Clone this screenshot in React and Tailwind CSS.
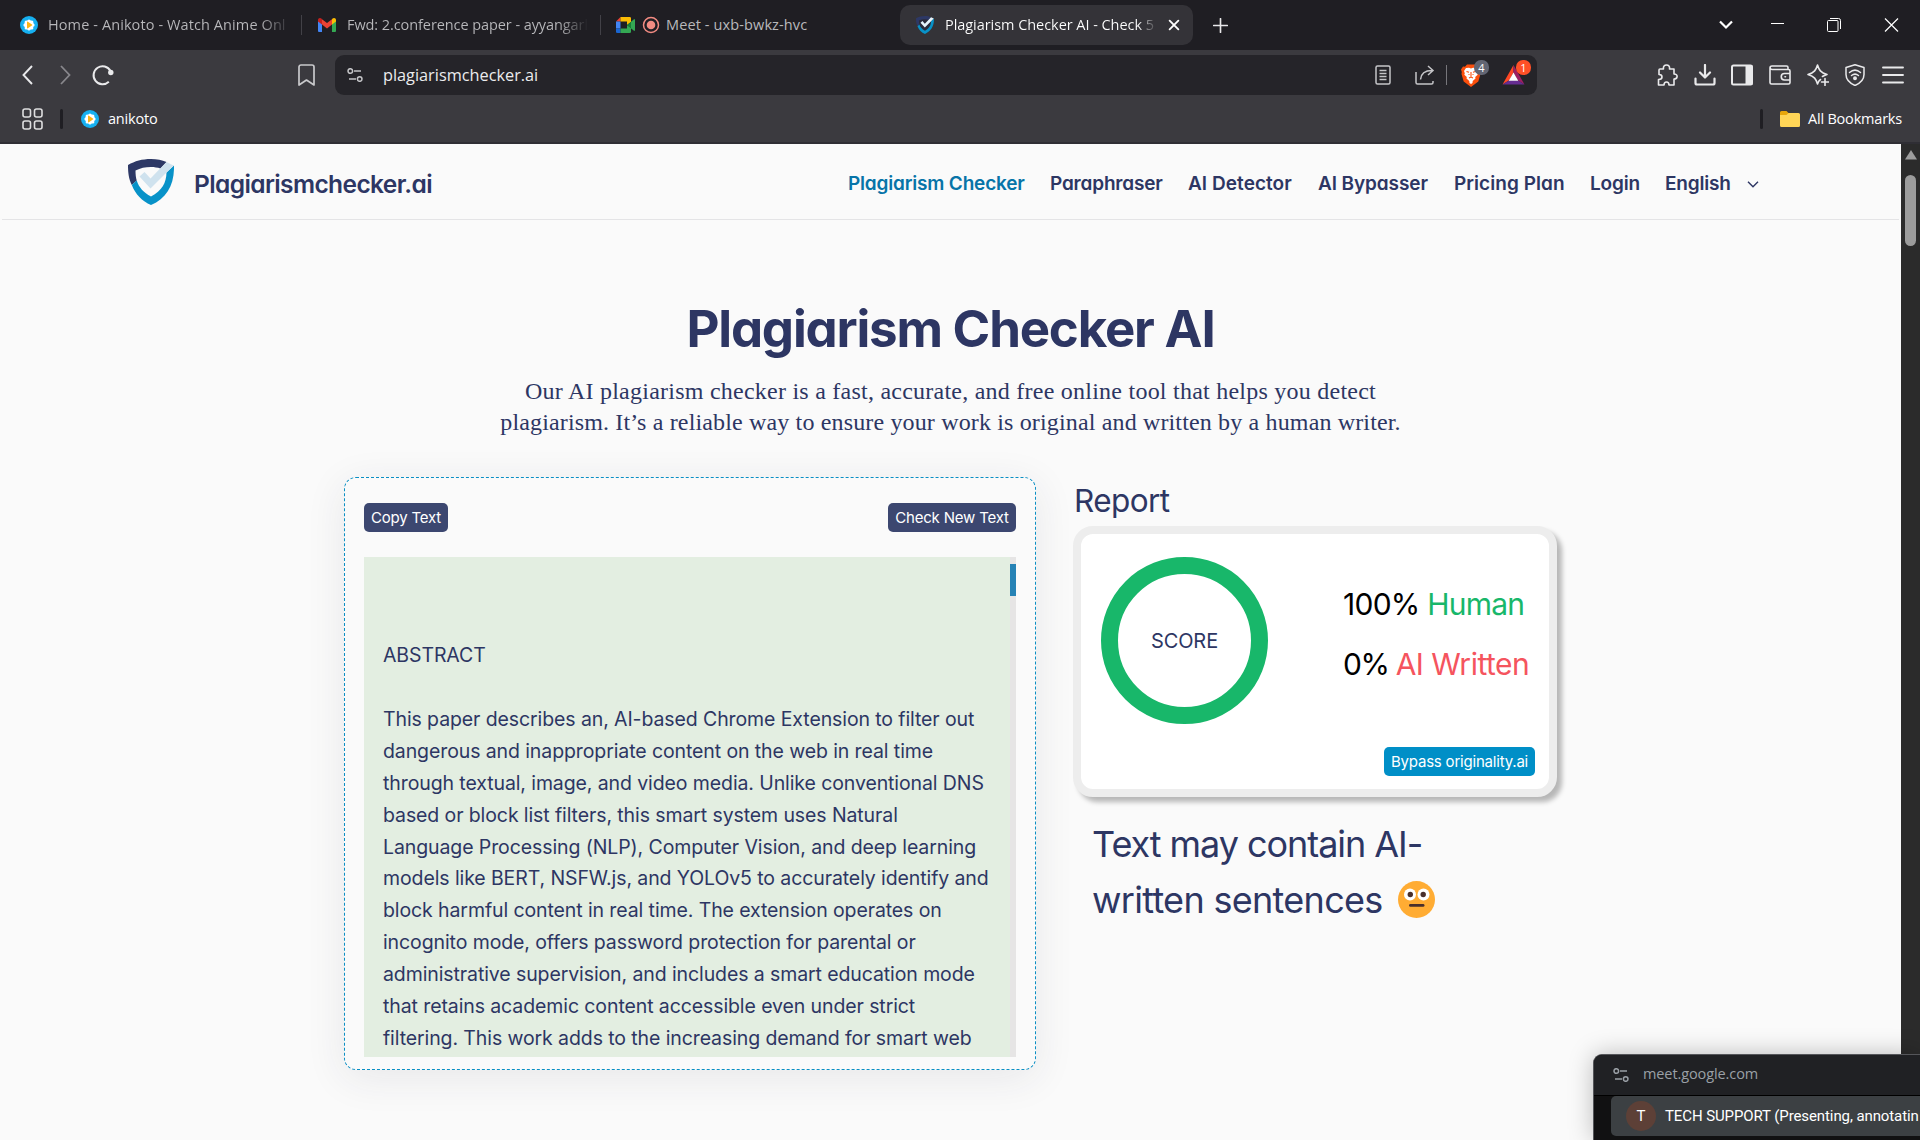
import React from "react";

const UI = "font-['Open_Sans',sans-serif]";

function AnikotoIcon() {
  return (
    <svg className="h-[18px] w-[18px] shrink-0" viewBox="0 0 18 18">
      <circle cx="9" cy="9" r="9" fill="#16b0f0" />
      <g fill="#fff">
        <circle cx="9" cy="9" r="4.8" />
        <circle cx="9" cy="4.9" r="1.5" />
        <circle cx="9" cy="13.1" r="1.5" />
        <circle cx="4.9" cy="9" r="1.5" />
        <circle cx="13.1" cy="9" r="1.5" />
        <circle cx="6.1" cy="6.1" r="1.5" />
        <circle cx="11.9" cy="6.1" r="1.5" />
        <circle cx="6.1" cy="11.9" r="1.5" />
        <circle cx="11.9" cy="11.9" r="1.5" />
      </g>
      <path d="M7 6.2v5.6a.6.6 0 0 0 .9.5l4-2.7a.7.7 0 0 0 0-1.2l-4-2.7a.6.6 0 0 0-.9.5z" fill="#fcb414" />
    </svg>
  );
}

function GmailIcon() {
  return (
    <svg className="h-[14px] w-[18px] shrink-0" viewBox="0 0 18 14">
      <path d="M0 2.2V13a1 1 0 0 0 1 1h3V5.5z" fill="#4285f4" />
      <path d="M18 2.2V13a1 1 0 0 1-1 1h-3V5.5z" fill="#34a853" />
      <path d="M14 1.2v5.4l4-3V2C18 .2 16-.6 14.600.5z" fill="#fbbc04" />
      <path d="M4 6.600V1.200L9 5l5-3.800v5.400l-5 3.800z" fill="#ea4335" />
      <path d="M0 2v1.600l4 3V1.200L3.400.5C2-.6 0 .2 0 2z" fill="#c5221f" />
    </svg>
  );
}

function MeetIcon() {
  return (
    <svg className="h-[16px] w-[19px] shrink-0" viewBox="0 0 19 16">
      <path d="M0 4.500 4.500 0v4.500z" fill="#ea4335" />
      <path d="M0 4.500h4.500v7H0z" fill="#4285f4" />
      <path d="M0 11.500h4.500V16H1.300A1.300 1.300 0 0 1 0 14.700z" fill="#1a66d2" />
      <path d="M4.500 0h9.200A1.300 1.300 0 0 1 15 1.300V5l-4 3V4.500H4.500z" fill="#fbbc04" />
      <path d="M4.500 11.500H11V8l4 3v3.700a1.300 1.300 0 0 1-1.300 1.300H4.500z" fill="#34a853" />
      <path d="M11 8l6.800-5.600c.5-.4 1.200-.1 1.200.5v10.200c0 .6-.7.900-1.200.5z" fill="#188038" />
      <path d="M15 5v6.200l2.800 2.400c.5.400 1.200.1 1.200-.5V2.900c0-.6-.7-.9-1.200-.5z" fill="#34a853" />
    </svg>
  );
}

function ShieldLogo({ className, check }) {
  return (
    <svg className={className} viewBox="0 0 46 46">
      <path d="M3.500 7.500C9 5 15 3.500 23 3.500c8 0 13 1.500 19.500 5.500C43 26 36 36 23 42.500 10 36 3.500 26 3.500 7.500z" fill={check ? "transparent" : "#26263c"} opacity=".6" />
      <path d="M0 6C7 2 14 0 23 0c6 0 11 1 15.500 3l-6 6.500C29.500 8.500 26.500 8 23 8 17 8 12.500 9 7.500 11.500c0 4 .4 7 1.200 10L3.800 26C.8 20 0 14 0 6z" fill="#2d3865" />
      <path d="M3.800 26l4.900-4.500C11 28.500 15.500 33.500 23 37.500 34 31.500 38.300 24 38.500 13.500L46 6.500C46.500 26 38.500 39 23 46 14 42 7.500 35.500 3.800 26z" fill="#0892c8" />
      <path d="M11.500 17.500l5-4.500 6 6.500L38.500 3l7 3.500L22.500 29.500z" fill={check ? "#cfe2ee" : "#e6f4fc"} />
    </svg>
  );
}

function Line({ className, size = 22, w = 1.6, children }) {
  return (
    <svg
      className={className}
      width={size}
      height={size}
      viewBox="0 0 22 22"
      fill="none"
      stroke="currentColor"
      strokeWidth={w}
      strokeLinecap="round"
      strokeLinejoin="round"
    >
      {children}
    </svg>
  );
}

function TuneIcon({ className }) {
  return (
    <svg className={className} viewBox="0 0 16 14" fill="none" stroke="currentColor" strokeWidth="1.5">
      <circle cx="3.300" cy="3" r="2.300" />
      <path d="M7 3h7" />
      <circle cx="12.700" cy="11" r="2.300" />
      <path d="M2 11h7" />
    </svg>
  );
}

function TabBar() {
  return (
    <div className={`flex h-[50px] items-center bg-[#1f1e23] text-[14.5px] text-[#b9b9bc] ${UI}`}>
      <div className="flex w-[301px] items-center pl-5">
        <AnikotoIcon />
        <div className="ml-[10px] w-[246px] whitespace-nowrap bg-gradient-to-r from-[#b9b9bc] from-[86%] to-transparent to-[99%] bg-clip-text tracking-[0.1px] text-transparent">
          Home - Anikoto - Watch Anime Onl
        </div>
      </div>
      <div className="h-5 w-px bg-[#424147]" />
      <div className="flex w-[298px] items-center pl-4">
        <GmailIcon />
        <div className="ml-[11px] w-[246px] whitespace-nowrap bg-gradient-to-r from-[#b9b9bc] from-[86%] to-transparent to-[98%] bg-clip-text tracking-[-0.08px] text-transparent">
          Fwd: 2.conference paper - ayyangarl
        </div>
      </div>
      <div className="h-5 w-px bg-[#424147]" />
      <div className="flex w-[299px] items-center pl-[15px]">
        <MeetIcon />
        <svg className="ml-[7px] h-[18px] w-[18px]" viewBox="0 0 18 18">
          <circle cx="9" cy="9" r="7.500" fill="none" stroke="#f28b82" strokeWidth="1.500" />
          <circle cx="9" cy="9" r="4.300" fill="#f28b82" />
        </svg>
        <div className="ml-[6px] whitespace-nowrap tracking-[0.12px]">Meet - uxb-bwkz-hvc</div>
      </div>
      <div className="flex h-10 w-[293px] items-center rounded-[10px] bg-[#343338] pl-4 text-white">
        <ShieldLogo className="h-[18px] w-[18px]" />
        <div className="ml-[11px] w-[212px] whitespace-nowrap bg-gradient-to-r from-white from-[91%] to-transparent bg-clip-text tracking-[-0.05px] text-transparent">
          Plagiarism Checker AI - Check 5
        </div>
        <Line className="ml-[11px]" size={12} w={3.4}>
          <path d="M3 3l16 16M19 3L3 19" />
        </Line>
      </div>
      <Line className="ml-[20px] text-[#e8e8ea]" size={15} w={2.4}>
        <path d="M11 1v20M1 11h20" />
      </Line>
      <div className="ml-auto flex items-center pr-[21px] text-white">
        <svg className="h-[10px] w-[14px]" viewBox="0 0 14 10" fill="none" stroke="currentColor" strokeWidth="2.200">
          <path d="M1 1.500l6 6 6-6" />
        </svg>
        <div className="mb-[3px] ml-[38px] h-px w-[13px] bg-white" />
        <svg className="ml-[43px] h-[14px] w-[14px]" viewBox="0 0 14 14" fill="none" stroke="currentColor">
          <rect x=".5" y="2.500" width="10.500" height="11" rx="1" />
          <path d="M3 .5h8.500a2 2 0 0 1 2 2V11" />
        </svg>
        <svg className="ml-[43px] h-[14px] w-[15px]" viewBox="0 0 15 14" fill="none" stroke="currentColor" strokeWidth="1.200">
          <path d="M1 .5l13 13M14 .5L1 13.500" />
        </svg>
      </div>
    </div>
  );
}

function BraveIcon() {
  return (
    <div className="relative h-[23px] w-[20px]">
      <svg className="h-[23px] w-[20px]" viewBox="0 0 20 23">
        <path d="M6 .5h8l2 2.200 2-.2 2 3-.8 2.500.3 2-2.200 7.500L10 23l-7.300-5.500L.5 10l.3-2L0 5.500l2-3 2 .2z" fill="#fb4f0c" />
        <path d="M10 4.500l2-.8 3 .2 2 3.100-.8 2.200.5 1.500-2.500 2.300.3 1.400-2.800 2.600-.2 2-1.500 1-1.500-1-.2-2-2.800-2.600.3-1.400-2.500-2.300.5-1.500L3 7l2-3.100 3-.2z" fill="#fff" />
        <path d="M5.500 7.500l2.500.7M14.500 7.500l-2.500.7M10 8v4.500M7.500 10.500h1M12.500 10.500h-1M8 14l2-1 2 1" stroke="#fb4f0c" strokeWidth="1.100" fill="none" />
      </svg>
      <div className="absolute -top-[4px] left-[13px] flex h-[15px] w-[15px] items-center justify-center rounded-[7px] bg-[#626573] text-[11px] leading-none text-white">4</div>
    </div>
  );
}

function RewardsIcon() {
  return (
    <div className="relative h-[20px] w-[23px]">
      <svg className="h-[20px] w-[23px]" viewBox="0 0 23 21">
        <path d="M11.500 0L0 20.500 7 16l4.500-8z" fill="#ff4724" />
        <path d="M11.500 0L23 20.500 16 16l-4.500-8z" fill="#9e1f63" />
        <path d="M0 20.500h23L16 16H7z" fill="#662d91" />
        <path d="M11.500 8l-5 8.500h10z" fill="#fff" />
      </svg>
      <div className="absolute -top-[5px] left-[14px] flex h-[15px] w-[15px] items-center justify-center rounded-[7px] bg-[#ff5027] text-[11px] leading-none text-white">1</div>
    </div>
  );
}

function Toolbar() {
  return (
    <div className={`flex h-[50px] items-center bg-[#3b3a3f] text-[#e9e9eb] ${UI}`}>
      <svg className="ml-[22px] h-5 w-[11px]" viewBox="0 0 11 20" fill="none" stroke="currentColor" strokeWidth="1.900">
        <path d="M10 1L1.500 10 10 19" />
      </svg>
      <svg className="ml-[27px] h-5 w-[11px] text-[#88878c]" viewBox="0 0 11 20" fill="none" stroke="currentColor" strokeWidth="1.800">
        <path d="M1 1l8.500 9L1 19" />
      </svg>
      <svg className="ml-[21px] h-[22px] w-[22px]" viewBox="0 0 22 22" fill="none" stroke="currentColor" strokeWidth="2">
        <path d="M16.800 17.800A9 9 0 1 1 18.500 7" />
        <circle cx="18.800" cy="8.500" r="2.700" fill="currentColor" stroke="none" />
      </svg>
      <svg className="ml-[184px] h-[22px] w-[17px] text-[#c9c9cc]" viewBox="0 0 17 22" fill="none" stroke="currentColor" strokeWidth="1.700" strokeLinejoin="round">
        <path d="M1 3a2 2 0 0 1 2-2h11a2 2 0 0 1 2 2v18l-7.500-5L1 21z" />
      </svg>
      <div className="ml-5 flex h-10 w-[1202px] items-center rounded-[9px] bg-[#252429] text-[#c5c5c8]">
        <TuneIcon className="ml-3 h-[14px] w-4" />
        <div className="ml-[20px] text-[16.3px] text-[#ececee]">plagiarismchecker.ai</div>
        <div className="ml-auto flex items-center pr-[12px]">
          <svg className="h-5 w-4" viewBox="0 0 16 20" fill="none" stroke="currentColor" strokeWidth="1.500">
            <rect x="1" y="1" width="14" height="18" rx="1.500" />
            <path d="M4.500 5.500h7M4.500 8.500h7M4.500 11.500h7M4.500 14.500h7" />
          </svg>
          <svg className="ml-6 h-5 w-5" viewBox="0 0 20 20" fill="none" stroke="currentColor" strokeWidth="1.500">
            <path d="M1 7v10.500A1.500 1.500 0 0 0 2.500 19h14a1.500 1.500 0 0 0 1.500-1.500V16M5.500 14.500C6 8.500 9.500 5.500 17 5.500M13 1l5 4.500-5 4.500" />
          </svg>
          <div className="ml-[11px] mr-[14px] h-5 w-px bg-[#77767b]" />
          <BraveIcon />
          <div className="w-[21px]" />
          <RewardsIcon />
        </div>
      </div>
      <div className="ml-auto mr-4 flex items-center gap-[15.7px]">
        <Line>
          <path d="M4 5h3.500C7 2.500 8.500 1 10.500 1S14 2.500 13.500 5H18v5c2 0 3.500 1 3 3-.3 1.500-1.500 2-3 2v6h-5c0-2-1-3-2.500-3S8 19 8 21H2.500v-5.500C4.500 15.500 6 14.500 6 13s-1-2.500-3-2.500V6a1 1 0 0 1 1-1z" />
        </Line>
        <Line w={2.2}>
          <path d="M11 1v12M6 8.500l5 5 5-5M1.500 14.500V19a1.500 1.500 0 0 0 1.500 1.500h16a1.500 1.500 0 0 0 1.500-1.500v-4.500" />
        </Line>
        <Line w={2}>
          <rect x="1" y="1.500" width="20" height="19" rx="1.500" />
          <path d="M15.500 2H20.500v18h-5z" fill="currentColor" />
        </Line>
        <Line>
          <path d="M19 5.500V3.500A1.500 1.500 0 0 0 17.500 2H3a2 2 0 0 0-2 2v14.500A1.500 1.500 0 0 0 2.500 20h17a1.500 1.500 0 0 0 1.500-1.500V7a1.500 1.500 0 0 0-1.500-1.500H3A1.800 1.800 0 0 1 1.200 4M21 9.500h-5.500a3.200 3.200 0 0 0 0 6.500H21M16 12.800h.5" />
        </Line>
        <Line>
          <path d="M13.500 15.500c-1.300.8-2.200 1.800-3 4.500C9 15 7.500 12.500 1 10.500 7.500 8.500 9 6 10.500 1c1.500 5 3 7.500 9.500 9.500-2 .6-3.500 1.300-4.500 2M18 14.500v7M14.500 18h7" />
        </Line>
        <Line w={1.5}>
          <path d="M11 .8l9 2.700v7c0 5-3.500 8.500-9 11-5.500-2.500-9-6-9-11v-7z" />
          <path d="M5.500 8.500c3.500-3 7.500-3 11 0M7.500 11.500c2.300-1.800 4.700-1.800 7 0" />
          <circle cx="11" cy="14.200" r="1.200" fill="currentColor" />
        </Line>
        <Line w={1.9}>
          <path d="M1 3.500h20M1 11h20M1 18.500h20" />
        </Line>
      </div>
    </div>
  );
}

function BookmarkBar() {
  return (
    <div className={`flex h-[44px] items-center border-b-2 border-[#2f2e34] bg-[#3b3a3f] pb-[4px] text-[14.5px] tracking-[-0.2px] text-white ${UI}`}>
      <svg className="ml-[22px] h-[22px] w-[21px]" viewBox="0 0 21 22" fill="none" stroke="#dededf" strokeWidth="1.600">
        <rect x="1" y="1" width="7.500" height="8" rx="2" />
        <rect x="12.500" y="1" width="7.500" height="8" rx="2" />
        <rect x="1" y="13" width="7.500" height="8" rx="2" />
        <rect x="12.500" y="13" width="7.500" height="8" rx="2" />
      </svg>
      <div className="ml-[17px] h-5 w-[3px] rounded-full bg-[#1f1e23]" />
      <div className="ml-[18px] flex items-center gap-[9px]">
        <AnikotoIcon />
        <span>anikoto</span>
      </div>
      <div className="ml-auto h-5 w-[3px] rounded-full bg-[#1f1e23]" />
      <svg className="ml-[17px] h-4 w-5" viewBox="0 0 20 16">
        <path d="M0 1.500A1.500 1.500 0 0 1 1.500 0h5L9 2.500 6 5H0z" fill="#e8a60a" />
        <path d="M0 4h6.500L8.500 2h10A1.500 1.500 0 0 1 20 3.500v11a1.500 1.500 0 0 1-1.500 1.500h-17A1.500 1.500 0 0 1 0 14.500z" fill="#ffd557" />
      </svg>
      <span className="ml-2 mr-[18px]">All Bookmarks</span>
    </div>
  );
}

const HEAD = "font-['Inter',sans-serif] [font-feature-settings:'cv11']";

function SiteHeader() {
  return (
    <header className={`mx-[2px] flex h-[76px] items-center border-b border-[#e4e4e6] font-semibold text-[#2d3663] ${HEAD}`}>
      <ShieldLogo check className="ml-[126px] mt-px h-[46px] w-[46px]" />
      <div className="ml-[20px] mt-[5px] w-[654px] text-[24.5px] tracking-[-0.6px]">Plagiarismchecker.ai</div>
      <nav className="mt-[5px] flex items-center whitespace-nowrap text-[19px] tracking-[-0.18px]">
        <a className="w-[202px] text-[#0774a8]">Plagiarism Checker</a>
        <a className="w-[138px]">Paraphraser</a>
        <a className="w-[130px] tracking-[0.05px]">AI Detector</a>
        <a className="w-[136px] tracking-[-0.1px]">AI Bypasser</a>
        <a className="w-[136px] tracking-[0.05px]">Pricing Plan</a>
        <a className="w-[75px]">Login</a>
        <a className="w-[82px]">English</a>
        <svg className="h-[7px] w-3" viewBox="0 0 12 7" fill="none" stroke="currentColor" strokeWidth="1.400">
          <path d="M1 .8l5 5 5-5" />
        </svg>
      </nav>
    </header>
  );
}

const LINES = [
  "This paper describes an, AI-based Chrome Extension to filter out",
  "dangerous and inappropriate content on the web in real time",
  "through textual, image, and video media. Unlike conventional DNS",
  "based or block list filters, this smart system uses Natural",
  "Language Processing (NLP), Computer Vision, and deep learning",
  "models like BERT, NSFW.js, and YOLOv5 to accurately identify and",
  "block harmful content in real time. The extension operates on",
  "incognito mode, offers password protection for parental or",
  "administrative supervision, and includes a smart education mode",
  "that retains academic content accessible even under strict",
  "filtering. This work adds to the increasing demand for smart web",
];

function TextPanel() {
  return (
    <section className="h-[593px] w-[692px] rounded-[12px] border border-dashed border-[#0a8fc4] bg-[#fafafa] px-[19px] pt-[25px] shadow-[0_8px_40px_rgba(40,40,70,0.09)]">
      <div className="flex justify-between text-[15px] tracking-[-0.18px] text-white">
        <button className="h-[29px] w-[84px] rounded-[5px] bg-[#3c4770] pt-px">Copy Text</button>
        <button className="h-[29px] w-[128px] rounded-[5px] bg-[#3c4770] pt-px">Check New Text</button>
      </div>
      <div className="mt-[25px] flex h-[500px] justify-between overflow-hidden bg-[#e3eee1]">
        <div className="whitespace-nowrap pl-[19px] pt-[83px] text-[19.5px] leading-[31.9px] tracking-[-0.1px]">
          <p className="mb-8">ABSTRACT</p>
          {LINES.map((line) => (
            <p key={line}>{line}</p>
          ))}
        </div>
        <div className="w-[6px] bg-[#e6e5e5] pt-[7px]">
          <div className="h-8 bg-[#2682b5]" />
        </div>
      </div>
    </section>
  );
}

function Report() {
  return (
    <section className="ml-[37px] w-[485px]">
      <h2 className="mt-[4px] h-[45px] pl-px text-[31.5px] leading-[40px] tracking-[-0.6px]">Report</h2>
      <div className="flex h-[271px] w-[484px] flex-col rounded-[20px] border-8 border-[#ededed] bg-white pl-5 pr-[14px] pt-[23px] shadow-[5px_5px_5px_rgba(0,0,0,0.27)]">
        <div className="flex">
          <div className="flex h-[167px] w-[167px] items-center justify-center rounded-full border-[17px] border-[#18b76a] text-[20px] tracking-[-0.1px]">
            SCORE
          </div>
          <div className="ml-[75px] whitespace-nowrap pt-[17px] text-[30px] leading-[60px] tracking-[-0.75px] text-black">
            <p>
              100% <span className="text-[#18b76a]">Human</span>
            </p>
            <p>
              <span className="tracking-[-1.4px]">0% </span>
              <span className="tracking-[-0.5px] text-[#f5545e]">AI Written</span>
            </p>
          </div>
        </div>
        <button className="mt-[23px] h-[29px] w-[151px] self-end rounded-[5px] bg-[#008fc7] pt-px text-[15px] tracking-[-0.2px] text-white">
          Bypass originality.ai
        </button>
      </div>
      <div className="mt-[19px] whitespace-nowrap pl-[19px] text-[36px] leading-[56px]">
        <p className="tracking-[-1.05px]">Text may contain AI-</p>
        <p className="flex items-center tracking-[-0.7px]">
          written sentences
          <svg className="mb-[2px] ml-[15px] h-[37px] w-[37px]" viewBox="0 0 37 37">
            <circle cx="18.500" cy="18.500" r="18.500" fill="#ffac33" />
            <circle cx="12" cy="13.500" r="6" fill="#fff" />
            <circle cx="25.500" cy="13.500" r="6" fill="#fff" />
            <circle cx="12.300" cy="13.500" r="2.700" fill="#4a2f2b" />
            <circle cx="25.200" cy="13.500" r="2.700" fill="#4a2f2b" />
            <rect x="11" y="23" width="15.500" height="2.800" rx="1.400" fill="#4a2f2b" />
          </svg>
        </p>
      </div>
    </section>
  );
}

function MeetPopup() {
  return (
    <aside className="absolute bottom-0 right-0 h-[86px] w-[327px] rounded-tl-[9px] border-l border-t border-[#55565a] bg-[#111112] shadow-[0_0_24px_rgba(0,0,0,0.25)]">
      <div className={`flex h-[41px] items-center rounded-tl-[8px] border-b border-black bg-[#202124] pl-[19px] text-[14.5px] tracking-[-0.1px] text-[#9aa0a6] ${UI}`}>
        <TuneIcon className="h-[14px] w-4" />
        <span className="-mt-[3px] ml-[14px]">meet.google.com</span>
      </div>
      <div className="ml-[17px] flex h-10 items-center rounded-l-[5px] bg-[#3c4043] pl-[15px] font-['Roboto',sans-serif] text-[15px] text-white">
        <div className="flex h-[30px] w-[30px] shrink-0 items-center justify-center rounded-full bg-[#5d4037]">T</div>
        <span className="ml-[9px] whitespace-nowrap tracking-[-0.1px]">TECH SUPPORT (Presenting, annotatin</span>
      </div>
    </aside>
  );
}

export default function App() {
  return (
    <div className="relative flex h-[1140px] w-[1920px] flex-col overflow-hidden bg-[#fafafa]">
      <TabBar />
      <Toolbar />
      <BookmarkBar />
      <div className="flex min-h-0 flex-1">
        <main className="w-[1901px] font-['Inter',sans-serif] text-[#2d3663]">
          <SiteHeader />
          <h1 className={`mt-[79px] text-center text-[51px] font-bold leading-[60px] tracking-[-1.2px] ${HEAD}`}>Plagiarism Checker AI</h1>
          <div className="mt-[17px] text-center font-['Liberation_Serif',serif] text-[24px] leading-[31px]">
            <p className="tracking-[0.24px]">Our AI plagiarism checker is a fast, accurate, and free online tool that helps you detect</p>
            <p className="tracking-[0.15px]">plagiarism. It’s a reliable way to ensure your work is original and written by a human writer.</p>
          </div>
          <div className="ml-[344px] mt-[39px] flex">
            <TextPanel />
            <Report />
          </div>
        </main>
        <div className="flex w-[19px] flex-col items-center bg-[#2b2b2b] pt-[6px]">
          <svg className="h-[10px] w-3" viewBox="0 0 12 10">
            <path d="M6 0l6 9.500H0z" fill="#9c9c9c" />
          </svg>
          <div className="mt-[15px] h-[71px] w-[11px] rounded-full bg-[#9c9c9c]" />
        </div>
      </div>
      <MeetPopup />
    </div>
  );
}
